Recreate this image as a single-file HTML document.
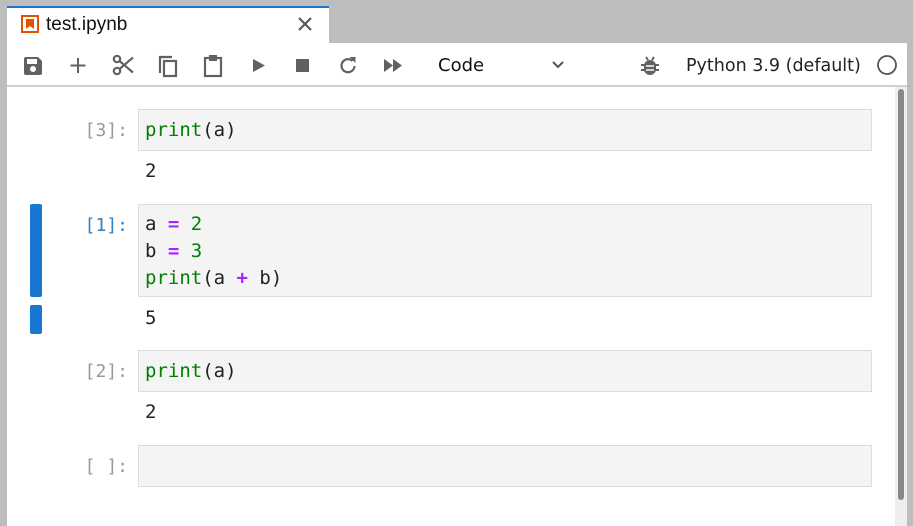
<!DOCTYPE html>
<html><head><meta charset="utf-8"><style>
*{margin:0;padding:0;box-sizing:border-box}
body{width:913px;height:526px;background:#bdbdbd;position:relative;overflow:hidden;font-family:"DejaVu Sans","Liberation Sans",sans-serif}
.abs{position:absolute}
.tab{left:7px;top:6px;width:322px;height:38px;background:#fff;border-top:2px solid #1976d2}
.main{left:7px;top:43px;width:900px;height:483px;background:#fff}
.tb{left:7px;top:85px;width:900px;height:2px;background:#d0d0d0}
.ico{position:absolute;top:54px}
.box{position:absolute;left:138px;width:734px;background:#f4f4f4;border:1px solid #dcdcdc}
.code{font-family:"DejaVu Sans Mono","Liberation Mono",monospace;font-size:19px;line-height:27px;color:#222;white-space:pre}
.g{color:#008000}.p{color:#aa22ff;font-weight:bold}.num{color:#008000}
.pr{position:absolute;right:785px;font-family:"DejaVu Sans Mono",monospace;font-size:18px;color:#999;white-space:pre}
.out{position:absolute;left:145px;font-family:"DejaVu Sans Mono",monospace;font-size:19px;color:#222}
.bar{position:absolute;left:30px;width:12px;background:#1976d2;border-radius:2px}
</style></head><body>
<div class="abs tab"></div>
<div class="abs main"></div>
<div class="abs tb"></div>
<svg class="abs" style="left:21px;top:15px" width="18" height="18" viewBox="0 0 18 18"><rect x="1" y="1" width="16" height="16" fill="none" stroke="#e65100" stroke-width="2"/><path d="M5 4h8v10l-4-3-4 3z" fill="#e65100"/></svg>
<div class="abs" style="left:46px;top:14px;font-family:'Liberation Sans',sans-serif;font-size:19px;color:#111">test.ipynb</div>
<svg class="abs" style="left:297px;top:16px" width="16" height="16"><path d="M2 2L14 14M14 2L2 14" stroke="#555" stroke-width="2"/></svg>
<!-- toolbar icons -->
<svg class="ico" style="left:23px;top:56px" width="20" height="20" viewBox="0 0 20 20"><path d="M1 3q0-2 2-2h12l4 4v12q0 2-2 2H3q-2 0-2-2z" fill="#616161"/><rect x="4" y="3" width="10" height="5" fill="#fff"/><circle cx="10" cy="13" r="3" fill="#fff"/></svg>
<svg class="ico" style="left:67px" width="22" height="22"><path d="M11 4v15M3.5 11.5h15" stroke="#616161" stroke-width="2"/></svg>
<svg class="ico" style="left:112px" width="22" height="22" viewBox="0 0 22 22"><circle cx="5" cy="5" r="3.2" fill="none" stroke="#616161" stroke-width="2.2"/><circle cx="5" cy="17" r="3.2" fill="none" stroke="#616161" stroke-width="2.2"/><path d="M7.5 7L21 18.5M7.5 15L21 3.5" stroke="#616161" stroke-width="2.2"/></svg>
<svg class="ico" style="left:157px" width="22" height="24" viewBox="0 0 22 24"><path d="M3 19V3h12" fill="none" stroke="#616161" stroke-width="2.2"/><rect x="7" y="7" width="12" height="15" fill="none" stroke="#616161" stroke-width="2.2"/></svg>
<svg class="ico" style="left:202px" width="22" height="24" viewBox="0 0 22 24"><rect x="3" y="4" width="16" height="18" fill="none" stroke="#616161" stroke-width="2.2"/><rect x="7" y="1" width="8" height="6" fill="#616161"/></svg>
<svg class="ico" style="left:250px" width="18" height="22"><path d="M3 5l12 6.5-12 6.5z" fill="#616161"/></svg>
<svg class="ico" style="left:294px" width="18" height="22"><rect x="2" y="5" width="13" height="13" fill="#616161"/></svg>
<svg class="ico" style="left:337px" width="22" height="22" viewBox="0 0 22 22"><path d="M17.5 12a6.5 6.5 0 1 1-2-5" fill="none" stroke="#616161" stroke-width="2.2"/><path d="M12.5 3h6v6z" fill="#616161"/></svg>
<svg class="ico" style="left:382px" width="22" height="22"><path d="M2 5l9 6.5-9 6.5zM11 5l9 6.5-9 6.5z" fill="#616161"/></svg>
<div class="abs" style="left:438px;top:55px;font-size:18px;color:#111">Code</div>
<svg class="abs" style="left:551px;top:60px" width="14" height="10"><path d="M2 2l5 5 5-5" fill="none" stroke="#555" stroke-width="2"/></svg>
<svg class="abs" style="left:640px;top:55px" width="20" height="22" viewBox="0 0 20 22"><path d="M6 2l2 3M14 2l-2 3" stroke="#616161" stroke-width="2"/><rect x="4" y="5" width="12" height="15" rx="6" fill="#616161"/><path d="M1 10h18M1 15h18" stroke="#616161" stroke-width="2"/><path d="M6 11h8M6 15h8" stroke="#fff" stroke-width="1.5"/></svg>
<div class="abs" style="left:686px;top:56px;font-size:17.5px;color:#222">Python 3.9 (default)</div>
<svg class="abs" style="left:876px;top:54px" width="22" height="22"><circle cx="11" cy="11" r="9" fill="none" stroke="#555" stroke-width="1.8"/></svg>
<!-- scrollbar -->
<div class="abs" style="left:895px;top:87px;width:12px;height:439px;background:#eeeef0"></div>
<div class="abs" style="left:898px;top:89px;width:6px;height:411px;background:#888;border-radius:3px"></div>
<!-- cells -->
<div class="pr" style="top:120px">[3]:</div>
<div class="box code" style="top:109px;height:42px;padding:7px 6px"><span class="g">print</span>(a)</div>
<div class="out" style="top:160px">2</div>

<div class="bar" style="top:204px;height:93px"></div>
<div class="bar" style="top:305px;height:29px"></div>
<div class="pr" style="top:215px;color:#307fc1">[1]:</div>
<div class="box code" style="top:204px;height:93px;padding:6px 6px">a <span class="p">=</span> <span class="num">2</span>
b <span class="p">=</span> <span class="num">3</span>
<span class="g">print</span>(a <span class="p">+</span> b)</div>
<div class="out" style="top:307px">5</div>

<div class="pr" style="top:361px">[2]:</div>
<div class="box code" style="top:350px;height:42px;padding:7px 6px"><span class="g">print</span>(a)</div>
<div class="out" style="top:401px">2</div>

<div class="pr" style="top:456px">[ ]:</div>
<div class="box" style="top:445px;height:42px"></div>
</body></html>
